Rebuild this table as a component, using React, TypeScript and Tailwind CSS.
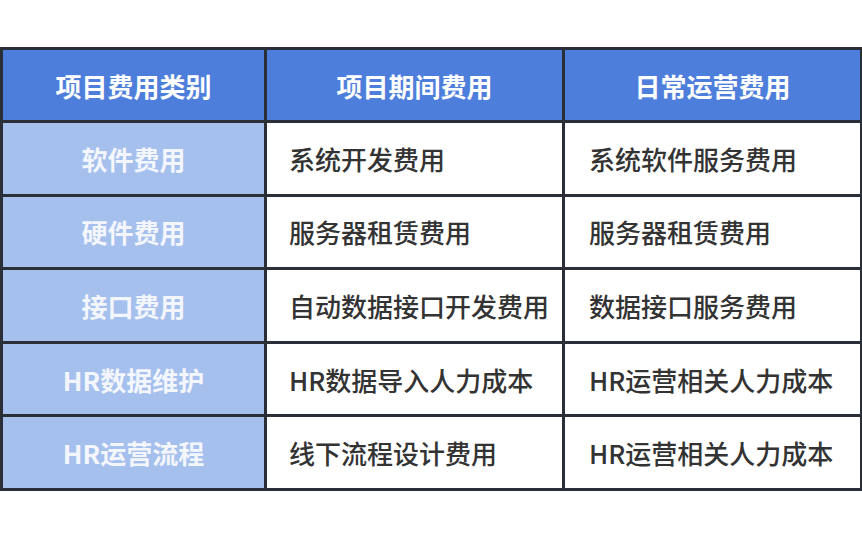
const rows = [
  { kind: "软件费用", project: "系统开发费用", daily: "系统软件服务费用" },
  { kind: "硬件费用", project: "服务器租赁费用", daily: "服务器租赁费用" },
  { kind: "接口费用", project: "自动数据接口开发费用", daily: "数据接口服务费用" },
  { kind: "HR数据维护", project: "HR数据导入人力成本", daily: "HR运营相关人力成本" },
  { kind: "HR运营流程", project: "线下流程设计费用", daily: "HR运营相关人力成本" },
];

const App = () => {
  return (
    <div
      className="w-[862px] h-[544px] bg-white pt-[47px] overflow-hidden"
      style={{ fontFamily: '"Noto Sans CJK SC", "Noto Sans", sans-serif' }}
    >
      <table className="w-[860px] border-collapse table-fixed">
        <colgroup>
          <col className="w-[264px]" />
          <col className="w-[298px]" />
          <col className="w-[298px]" />
        </colgroup>
        <thead>
          <tr className="h-[73px] bg-[#4e7edb] text-white text-[26px] font-bold">
            <th className="border-[3px] border-[#2a2e37] text-center">项目费用类别</th>
            <th className="border-[3px] border-[#2a2e37] text-center">项目期间费用</th>
            <th className="border-[3px] border-[#2a2e37] text-center">日常运营费用</th>
          </tr>
        </thead>
        <tbody>
          {rows.map((row) => (
            <tr key={row.kind + row.project} className="h-[73.6px] text-[26px]">
              <td className="border-[3px] border-[#2a2e37] bg-[#a6c0ee] text-[#f3f6fc] font-bold text-center">
                {row.kind}
              </td>
              <td className="border-[3px] border-[#2a2e37] text-[#333333] font-medium pl-[22px] whitespace-nowrap">
                {row.project}
              </td>
              <td className="border-[3px] border-[#2a2e37] text-[#333333] font-medium pl-[24px] whitespace-nowrap">
                {row.daily}
              </td>
            </tr>
          ))}
        </tbody>
      </table>
    </div>
  );
};

export default App;
